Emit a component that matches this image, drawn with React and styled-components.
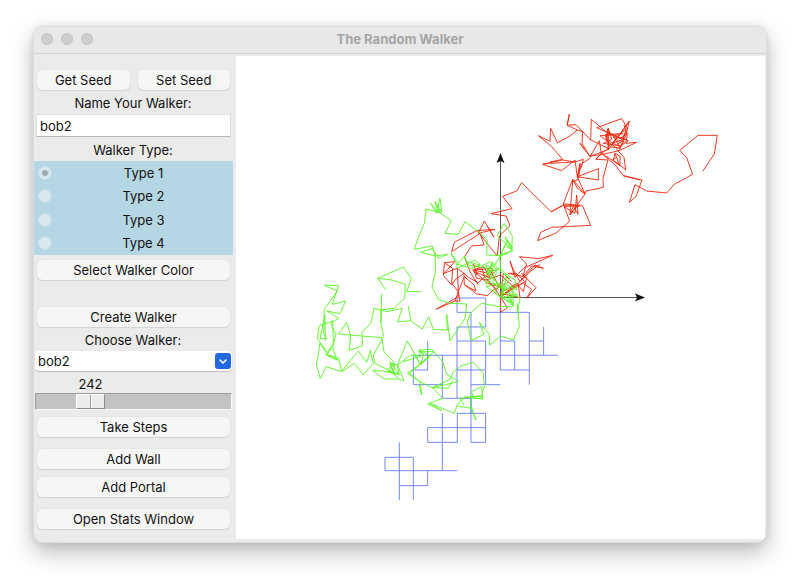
import { useState } from 'react';
import styled, { createGlobalStyle } from 'styled-components';

const GlobalStyle = createGlobalStyle`
  * {
    box-sizing: border-box;
  }
  body {
    margin: 0;
    background: #fff;
    color: #111;
    font-family: Inter, 'Liberation Sans', sans-serif;
    font-size: 13px;
    line-height: 16px;
  }
  button, input, select {
    font: inherit;
    color: inherit;
  }
`;

const Desktop = styled.div`
  padding: 26px 33px 40px;
`;

const Window = styled.main`
  overflow: hidden;
  border: 1px solid #dcdcdc;
  border-radius: 10px;
  background: #ebebeb;
  box-shadow: 0 10px 22px rgba(0, 0, 0, 0.26), 0 0 8px rgba(0, 0, 0, 0.1);
`;

const TitleBar = styled.header`
  display: grid;
  grid-template-columns: 1fr auto 1fr;
  align-items: center;
  height: 27px;
  padding: 0 7px 2px;
  border-bottom: 1px solid #d2d2d2;
  background: #e8e8e8;
`;

const Lights = styled.div`
  display: flex;
  gap: 8px;
`;

const Light = styled.span`
  width: 12px;
  height: 12px;
  border: 1px solid #c2c2c2;
  border-radius: 50%;
  background: #cdcdcd;
`;

const Title = styled.h1`
  margin: 0;
  color: #a5a5a5;
  font-size: 13px;
  font-weight: 700;
`;

const Content = styled.div`
  display: flex;
  padding: 2px 1px 3px 0;
`;

const Sidebar = styled.form`
  display: flex;
  flex-direction: column;
  flex: 0 0 202px;
  min-width: 0;
  padding: 14px 0 10px;
`;

const Group = styled.div`
  display: flex;
  gap: 8px;
  margin-bottom: ${({ $space }) => $space || 0}px;
  padding: 0 6px 0 3px;
`;

const Button = styled.button`
  flex: 1;
  height: 20px;
  padding: 0;
  border: 0;
  border-radius: 5px;
  background: #f6f6f6;
  box-shadow: 0 0 1px rgba(0, 0, 0, 0.2), 0 1px 1px rgba(0, 0, 0, 0.08);
  line-height: 20px;
`;

const Caption = styled.label`
  height: 22px;
  padding-right: 4px;
  line-height: 22px;
  text-align: center;
`;

const NameInput = styled.input`
  min-width: 0;
  height: 23px;
  margin: 0 5px 2px 2px;
  padding: 0 3px;
  border: 1px solid #dedede;
  border-bottom-color: #b8b8b8;
  border-radius: 0;
  background: #fff;
  outline: none;
`;

const Types = styled.fieldset`
  min-width: 0;
  margin: 0 3px 5px 0;
  padding: 0 4px;
  border: 0;
  background: #b5d7e4;
`;

const TypeList = styled.div`
  display: grid;
  grid-template-rows: repeat(4, 1fr);
  height: 94px;
`;

const TypeRow = styled.label`
  display: flex;
  align-items: center;
  span {
    flex: 1;
    padding-left: 6px;
    text-align: center;
  }
`;

const Radio = styled.input`
  appearance: none;
  width: 14px;
  height: 14px;
  margin: 0;
  border: 1px solid #c4dce5;
  border-radius: 50%;
  background: #d8e9f0;
  &:checked {
    background: radial-gradient(circle, #9aa7ac 0 2px, #d8e9f0 4px);
  }
`;

const SelectBox = styled.div`
  display: flex;
  position: relative;
  margin: 0 4px 4px 1px;
  svg {
    position: absolute;
    top: 2px;
    right: 1px;
    pointer-events: none;
  }
`;

const Select = styled.select`
  appearance: none;
  flex: 1;
  min-width: 0;
  height: 20px;
  padding: 0 20px 0 3px;
  border: 0;
  border-radius: 4px;
  background: #fff;
  box-shadow: 0 1px 1px rgba(0, 0, 0, 0.2);
  outline: none;
`;

const Steps = styled.div`
  display: flex;
  flex-direction: column;
  margin: 0 4px 7px 1px;
`;

const StepValue = styled.output`
  width: 29px;
  margin-left: 41px;
  line-height: 18px;
  text-align: center;
`;

const Slider = styled.input`
  appearance: none;
  width: 100%;
  height: 17px;
  margin: 0;
  border: 1px solid;
  border-color: #9b9b9b #f8f8f8 #f8f8f8 #9b9b9b;
  background: #c3c3c3;
  &::-webkit-slider-thumb {
    appearance: none;
    width: 29px;
    height: 15px;
    border: 1px solid;
    border-color: #fff #8c8c8c #8c8c8c #fff;
    background: linear-gradient(90deg, #ececec 13px, #999 13px 14px, #fff 14px 15px, #ececec 15px);
  }
`;

const Canvas = styled.svg`
  display: block;
  flex: 1;
  min-width: 0;
  background: #fff;
`;

// Every piece is drawn in thirds of a pixel from its own starting corner.
const red = [
  {
    x: 520,
    y: 100,
    lines: [
      '95,335 130,315 188,318 212,376 95,382 62,397 53,422 108,399 149,364 130,312 158,238 195,282 150,345 158,242',
      '130,312 180,316 132,320 165,340 170,285 174,343 160,318 150,345 168,322 180,316',
      '172,230 235,206 235,240 172,230',
      '158,238 172,265 195,282 198,273 250,262 249,235 264,180',
      '195,282 172,230 165,180 125,212 68,193 128,180 165,186 88,190 68,193',
      '165,186 190,178 186,195 172,230 180,190 176,238 158,245',
      '210,175 184,192 174,225',
      '172,90 150,108 112,128 92,85 90,124 55,107 95,140 128,178 90,186',
      '172,90 142,76 148,42 141,76 168,74 212,120 265,145 238,165 210,167',
      '172,90 188,95 186,130 210,170 238,122 244,160 300,195 317,210 312,172 290,148',
      '193,148 180,130 210,170 265,148 262,90 302,130',
      '212,120 214,58 258,95 325,122 290,145 240,107 296,104 322,85 305,56 230,83 300,115 325,100',
      '328,63 265,150 265,85 275,118 250,130 305,138 318,105 328,63 300,105 276,130 305,120 318,92 298,152',
      '312,75 322,105 317,130 350,127 298,152 240,165 228,178 264,180',
      '264,85 258,118 290,135 312,118 280,110 302,145 270,140 255,105 310,100',
      '285,160 280,182 300,197 300,168 285,160 298,195 278,180 290,172',
      '228,178 244,160 286,195 310,227 360,240',
    ],
  },
  {
    x: 620,
    y: 100,
    lines: [
      '10,227 66,240 48,290 28,307 45,254 80,273 140,279 163,253 218,223 200,173 179,151 234,106 292,106 283,162 248,214',
    ],
  },
  {
    x: 480,
    y: 140,
    lines: [
      '52,348 58,288 90,257 78,228 33,221 96,206 68,169 110,153 125,128 213,215 250,196',
      '62,472 105,440 165,375 190,385 155,378 128,410 140,372 118,350 175,356 218,346 130,385 105,412 90,363 100,390 120,425 150,395 180,372',
      '125,400 168,443 140,475 155,448 130,430 98,440 62,470 135,425 108,400 85,400 140,412 130,455 110,430 60,460 120,473 115,435',
      '62,472 62,517 82,503 62,472 40,440 20,420 62,405 100,440 62,470 70,400 95,425',
    ],
  },
  {
    x: 400,
    y: 190,
    lines: [
      '155,185 163,157 230,122 285,118 235,130 253,93 282,142 262,108',
      '155,185 240,130 252,165 215,168 193,200 210,245 235,285',
      '230,120 265,165 292,198',
      '133,222 130,256 155,285 165,270 192,250 205,262 235,278 265,250 220,240',
      '165,215 132,218 158,235 155,280 175,305 172,235 132,250 165,215',
      '172,235 192,250 193,285 228,303 222,285 193,260 175,305 180,333 165,333 175,305 175,320 108,358 165,333',
      '195,285 230,312 262,317 280,300 300,290',
      '218,225 245,235 255,262 280,250 275,235 222,240 230,265 265,270 290,300 300,280',
      '220,222 232,255 218,240 252,230 270,265 225,245 262,280 298,290 270,240',
    ],
  },
];

const green = [
  {
    x: 400,
    y: 190,
    lines: [
      '90,38 115,68 105,35 125,65 120,25 110,70 92,40',
      '108,45 122,68 78,57 73,100 55,142 43,178 97,168 105,198 62,187 97,175 115,205 143,193 105,198 107,240 96,290 115,328 150,340 200,342',
      '115,65 154,92 135,130 175,133 195,95 235,125 262,150 260,195 305,197',
      '152,188 175,220 193,198 200,215 240,225 215,235 170,222 152,188',
      '170,222 172,235 225,210 245,228 270,215 290,240 265,270',
      '193,198 205,225 260,235 280,260 262,275 300,290',
    ],
  },
  {
    x: 480,
    y: 140,
    lines: [
      '52,288 72,250 97,288 95,330 75,290 98,325 82,300 60,350 98,332 60,345 62,395 40,370 20,400 60,385 75,400 105,420 110,450 72,430 62,472 20,440 15,410 38,365 25,405 60,435 80,410 65,470 98,498 90,460 60,440 40,450 62,472 110,468 120,475 112,520',
      '52,288 85,318 98,332 75,315 60,350 25,405 18,375 50,395 40,430 70,450 98,440 100,500 85,465',
      '62,395 90,415 75,440 112,465 62,460 98,490 62,472 75,445 52,430 20,440',
    ],
  },
  {
    x: 400,
    y: 290,
    lines: [
      '352,40 358,110 340,150 302,138 270,165 268,133 238,97 252,133 213,152 202,95 213,68 245,40 300,50 335,50',
      '200,42 195,85 150,153 140,73 142,120 100,118 86,80 67,117 32,93 25,48',
      '58,180 95,178 128,215 140,252 175,275 97,293 150,268 160,245 185,227 220,217 250,250 253,290 243,325 220,325 215,305 245,290 248,327 195,320 172,343 163,370 90,340 125,362 83,342 128,325 97,293 60,275 27,250 92,198 58,180 72,195 10,215',
      '60,275 65,315 58,285',
      '172,348 215,355 228,390 215,355 213,320 243,318 180,325 192,345',
      '97,293 145,295 158,272',
    ],
  },
  {
    x: 310,
    y: 255,
    lines: [
      '302,197 263,201 277,160 232,170 192,160 183,203 155,233 158,272 118,286 122,240 110,203 85,237 215,248',
      '215,117 213,203 212,165 252,160 284,130 286,88 245,75 203,70 280,36 304,70 290,110 333,110',
      '203,70 227,104',
      '213,203 221,245 190,300 195,325 240,348 265,370',
      '215,248 222,290 250,320 240,350 188,346 222,372 265,372 282,377 263,330 298,303 330,300',
      '182,285 170,322 145,288 95,348 85,308 46,298 80,315 68,275',
      '180,285 190,325 160,360 133,325 95,350 48,335 31,371 19,330 30,265 50,295 70,265 68,198 28,212 22,250 50,290',
      '43,91 86,91 67,148 107,138 90,176 50,168 86,190 62,205 78,238 68,275 50,300 85,315',
      '43,91 82,108 43,163 41,235 50,252 30,250 45,180 46,255',
      '230,345 255,325 250,355 240,320 265,355 230,350 268,360 262,330 240,325 255,360',
      '263,330 268,315 292,258 332,330 340,298 325,290 372,290 332,325 310,298',
      '355,310 292,355 330,380',
    ],
  },
];

const blue = [
  {
    x: 400,
    y: 290,
    path: 'M171 24H257M171 67H213M257 67H388M171 111H257M171 153H257M301 153H344M388 153H431M40 196H474M40 240H83M171 240H257M301 240H388M40 284H127M213 284H301M127 325H213M40 196V284M83 153V240M127 196V325M171 24V67M171 111V325M213 67V370M257 24V111M257 153V284M301 24V240M344 153V240M388 67V284M431 111V196',
  },
  {
    x: 370,
    y: 380,
    path: 'M262 100H347M173 143H347M173 187H262M303 187H347M45 232H130M45 272H262M88 317H173M45 232V272M88 187V360M130 232V360M173 143V187M173 272V317M217 100V272M262 100V187M303 55V187M347 100V187',
  },
];

const place = ({ x, y }) => `translate(${x} ${y}) scale(0.3333)`;

const Trail = ({ parts, color }) => (
  <g fill='none' stroke={color} strokeWidth='2.8'>
    {parts.map((part) => (
      <g key={`${part.x}-${part.y}`} transform={place(part)}>
        {part.path && <path d={part.path} />}
        {part.lines?.map((points) => (
          <polyline key={points} points={points} />
        ))}
      </g>
    ))}
  </g>
);

const Plot = () => (
  <Canvas viewBox='236 56 529 483' role='img' aria-label='Walker paths'>
    <Trail parts={blue} color='#6680fa' />
    <path d='M500.5 297V160M500 297.5H637' stroke='#555' fill='none' />
    <path d='M500.5 153L504.5 163L500.5 161L496.5 163ZM645 297.5L635 301.5L637 297.5L635 293.5Z' fill='#111' />
    <Trail parts={red} color='#ee2c12' />
    <Trail parts={green} color='#5af526' />
  </Canvas>
);

const App = () => {
  const [name, setName] = useState('bob2');
  const [type, setType] = useState(1);
  const [steps, setSteps] = useState(242);

  return (
    <>
      <GlobalStyle />
      <Desktop>
        <Window>
          <TitleBar>
            <Lights>
              <Light />
              <Light />
              <Light />
            </Lights>
            <Title>The Random Walker</Title>
          </TitleBar>
          <Content>
            <Sidebar onSubmit={(e) => e.preventDefault()}>
              <Group $space={2}>
                <Button type='button'>Get Seed</Button>
                <Button type='button'>Set Seed</Button>
              </Group>
              <Caption htmlFor='name'>Name Your Walker:</Caption>
              <NameInput id='name' value={name} onChange={(e) => setName(e.target.value)} />
              <Caption as='div' id='types'>Walker Type:</Caption>
              <Types aria-labelledby='types'>
                <TypeList>
                  {[1, 2, 3, 4].map((n) => (
                    <TypeRow key={n}>
                      <Radio type='radio' name='type' checked={type === n} onChange={() => setType(n)} />
                      <span>Type {n}</span>
                    </TypeRow>
                  ))}
                </TypeList>
              </Types>
              <Group $space={27}>
                <Button type='button'>Select Walker Color</Button>
              </Group>
              <Group $space={2}>
                <Button type='button'>Create Walker</Button>
              </Group>
              <Caption htmlFor='walker'>Choose Walker:</Caption>
              <SelectBox>
                <Select id='walker'>
                  <option>bob2</option>
                </Select>
                <svg width='16' height='16' viewBox='0 0 16 16'>
                  <rect width='16' height='16' rx='3' fill='#2468df' />
                  <path d='M5 7l3 3 3-3' fill='none' stroke='#fff' strokeWidth='1.6' strokeLinecap='round' strokeLinejoin='round' />
                </svg>
              </SelectBox>
              <Steps>
                <StepValue htmlFor='steps'>{steps}</StepValue>
                <Slider
                  id='steps'
                  type='range'
                  aria-label='Steps'
                  min='0'
                  max='1000'
                  value={steps}
                  onChange={(e) => setSteps(Number(e.target.value))}
                />
              </Steps>
              <Group $space={12}>
                <Button type='button'>Take Steps</Button>
              </Group>
              <Group $space={8}>
                <Button type='button'>Add Wall</Button>
              </Group>
              <Group $space={12}>
                <Button type='button'>Add Portal</Button>
              </Group>
              <Group>
                <Button type='button'>Open Stats Window</Button>
              </Group>
            </Sidebar>
            <Plot />
          </Content>
        </Window>
      </Desktop>
    </>
  );
};

export default App;
